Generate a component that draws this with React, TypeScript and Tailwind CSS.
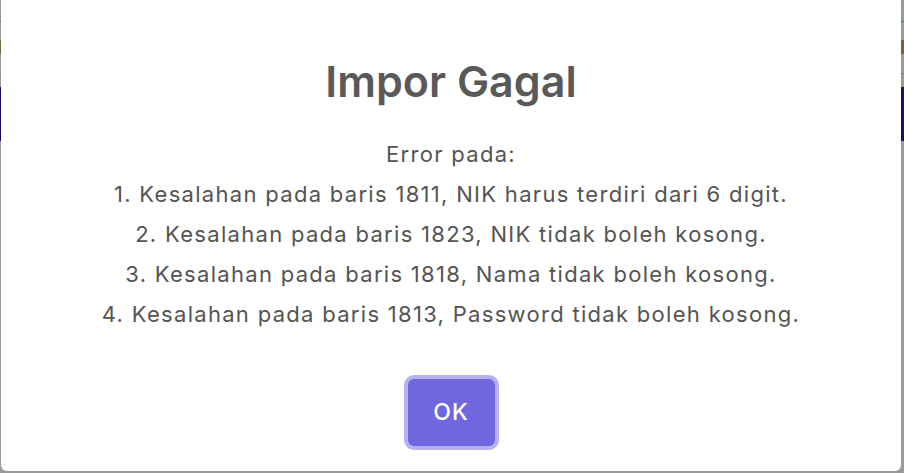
import React from 'react';

const lines = [
  'Error pada:',
  '1. Kesalahan pada baris 1811, NIK harus terdiri dari 6 digit.',
  '2. Kesalahan pada baris 1823, NIK tidak boleh kosong.',
  '3. Kesalahan pada baris 1818, Nama tidak boleh kosong.',
  '4. Kesalahan pada baris 1813, Password tidak boleh kosong.',
];

export default function App() {
  return (
    <div
      className="relative w-[904px] h-[473px] overflow-hidden bg-[#9a9a9a]"
      style={{ fontFamily: 'Inter, "Noto Sans", sans-serif' }}
    >
      {/* page behind the backdrop */}
      <div className="flex flex-col">
        <div className="h-[21px]" />
        <div className="h-px bg-[#4f7572]" />
        <div className="h-[18px]" />
        <div className="flex h-[14px] justify-between">
          <div className="w-px bg-[#6f6b3c]" />
          <div className="w-[3px] bg-[#7d5e3e]" />
        </div>
        <div className="h-[19px]" />
        <div className="h-px bg-[#6d7b7a]" />
        <div className="h-[13px]" />
        <div className="h-[54px] bg-[#13116c]" />
      </div>

      {/* modal */}
      <div className="absolute left-[1px] top-[-4px] w-[900px] h-[475px] rounded-[6px] bg-white flex flex-col items-center">
        <h2 className="mt-[59px] text-[43px] leading-[52px] font-semibold text-[#595959]">
          Impor Gagal
        </h2>
        <div className="mt-[27px] flex flex-col items-center text-[22px] leading-[40px] tracking-[1.3px] text-[#545454]">
          {lines.map((l) => (
            <div key={l}>{l}</div>
          ))}
        </div>
        <button className="mt-[45px] w-[87px] h-[67px] rounded-[6px] bg-[#7066e0] text-white text-[23px] font-medium tracking-[1px] shadow-[0_0_0_4px_rgba(112,102,224,0.5)]">
          OK
        </button>
      </div>
    </div>
  );
}
